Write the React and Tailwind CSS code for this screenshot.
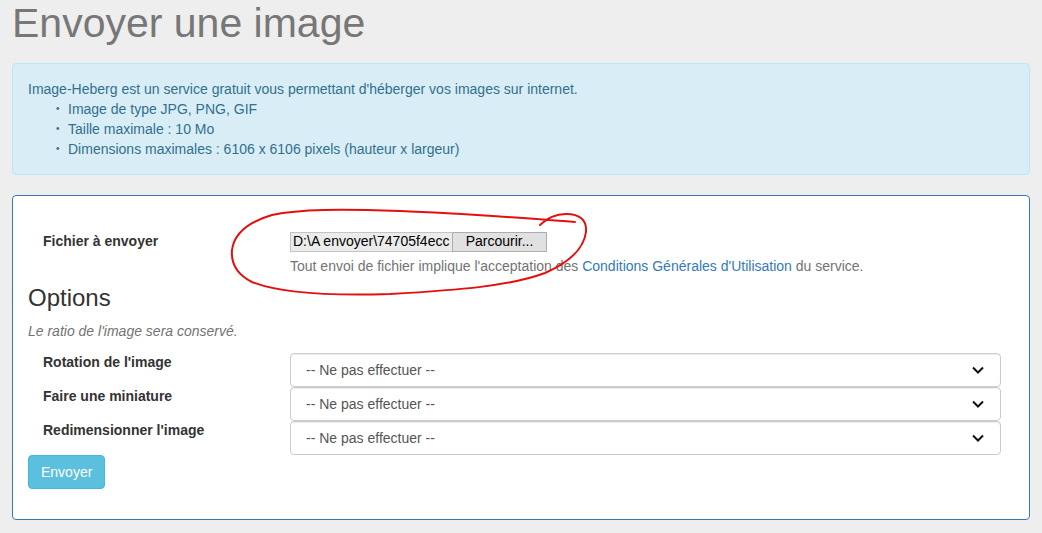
import React from 'react';

const options = [
  'Rotation de l\'image',
  'Faire une miniature',
  'Redimensionner l\'image',
];

const limits = [
  'Image de type JPG, PNG, GIF',
  'Taille maximale : 10 Mo',
  'Dimensions maximales : 6106 x 6106 pixels (hauteur x largeur)',
];

const Chevron = () => (
  <svg width="12" height="8" viewBox="0 0 12 8" className="shrink-0">
    <path d="M1 1.5 L6 6.5 L11 1.5" fill="none" stroke="#111" strokeWidth="2" />
  </svg>
);

const SelectRow = ({ label }) => (
  <div className="flex pl-[15px] h-[34px]">
    <div className="w-[247px] text-[14px] leading-[18px] font-bold text-[#333]">{label}</div>
    <div className="w-[711px] h-[34px] flex items-center justify-between pl-[15px] pr-[16px] border border-[#ccc] rounded-[4px] bg-white shadow-[inset_0_1px_1px_rgba(0,0,0,0.075)] text-[14px] text-[#555]">
      <span>-- Ne pas effectuer --</span>
      <Chevron />
    </div>
  </div>
);

export default function App() {
  return (
    <div
      className="relative min-h-screen bg-[#eeeeee] px-[12px] pt-px pb-[14px]"
      style={{ fontFamily: '"Liberation Sans", Arial, sans-serif' }}
    >
      <h1 className="text-[41px] leading-[45px] text-[#777] mb-[17px]">Envoyer une image</h1>

      <div className="border border-[#bce8f1] bg-[#d9edf7] rounded-[4px] p-[15px] text-[14px] leading-[20px] text-[#31708f]">
        <p>Image-Heberg est un service gratuit vous permettant d'héberger vos images sur internet.</p>
        <ul className="pl-[40px]">
          {limits.map((l) => (
            <li key={l} className="flex items-center">
              <span className="w-[12px] -ml-[12px] text-[10px] leading-[20px]">•</span>
              <span>{l}</span>
            </li>
          ))}
        </ul>
      </div>

      <div className="mt-[20px] border border-[#337ab7] rounded-[4px] bg-white pl-[15px] pt-[35px] pb-[30px] text-[14px] leading-[20px]">
        {/* file picker */}
        <div className="flex pl-[15px]">
          <div className="w-[247px] font-bold text-[#333]">Fichier à envoyer</div>
          <div>
            <div className="flex h-[20px] mt-px text-[14px] leading-[17px] text-black">
              <div className="w-[162px] overflow-hidden whitespace-nowrap bg-[#ebebeb] border border-[#c4c4c4] border-r-0 pl-[2px]">
                D:\A envoyer\74705f4ecc
              </div>
              <div className="w-[95px] bg-[#e1e1e1] border border-[#adadad] text-center">Parcourir...</div>
            </div>
            <p className="mt-[4px] text-[#737373]">
              Tout envoi de fichier implique l'acceptation des{' '}
              <a className="text-[#337ab7]">Conditions Générales d'Utilisation</a> du service.
            </p>
          </div>
        </div>

        <h3 className="mt-[9px] text-[24px] leading-[26px] text-[#333]">Options</h3>
        <p className="mt-[10px] italic text-[#737373]">Le ratio de l'image sera conservé.</p>

        <div className="mt-[12px]">
          {options.map((o) => (
            <SelectRow key={o} label={o} />
          ))}
        </div>

        <button className="h-[34px] px-[12px] border border-[#46b8da] bg-[#5bc0de] rounded-[4px] text-white text-[14px]">
          Envoyer
        </button>
      </div>

      {/* hand-drawn highlight around the file field */}
      <svg className="absolute left-0 top-0 pointer-events-none" width="1042" height="533">
        <path
          d="M540 225 C548 218 555 214 566 214 C580 214 587 220 586 232 C584 248 570 262 545 273 C510 286 460 290 390 294 C330 296 280 293 252 282 C236 274 231 262 232 250 C234 234 248 222 272 215 C300 209 340 209 400 211 C460 213 520 218 575 222"
          fill="none"
          stroke="#e31010"
          strokeWidth="2"
          strokeLinecap="round"
        />
      </svg>
    </div>
  );
}
